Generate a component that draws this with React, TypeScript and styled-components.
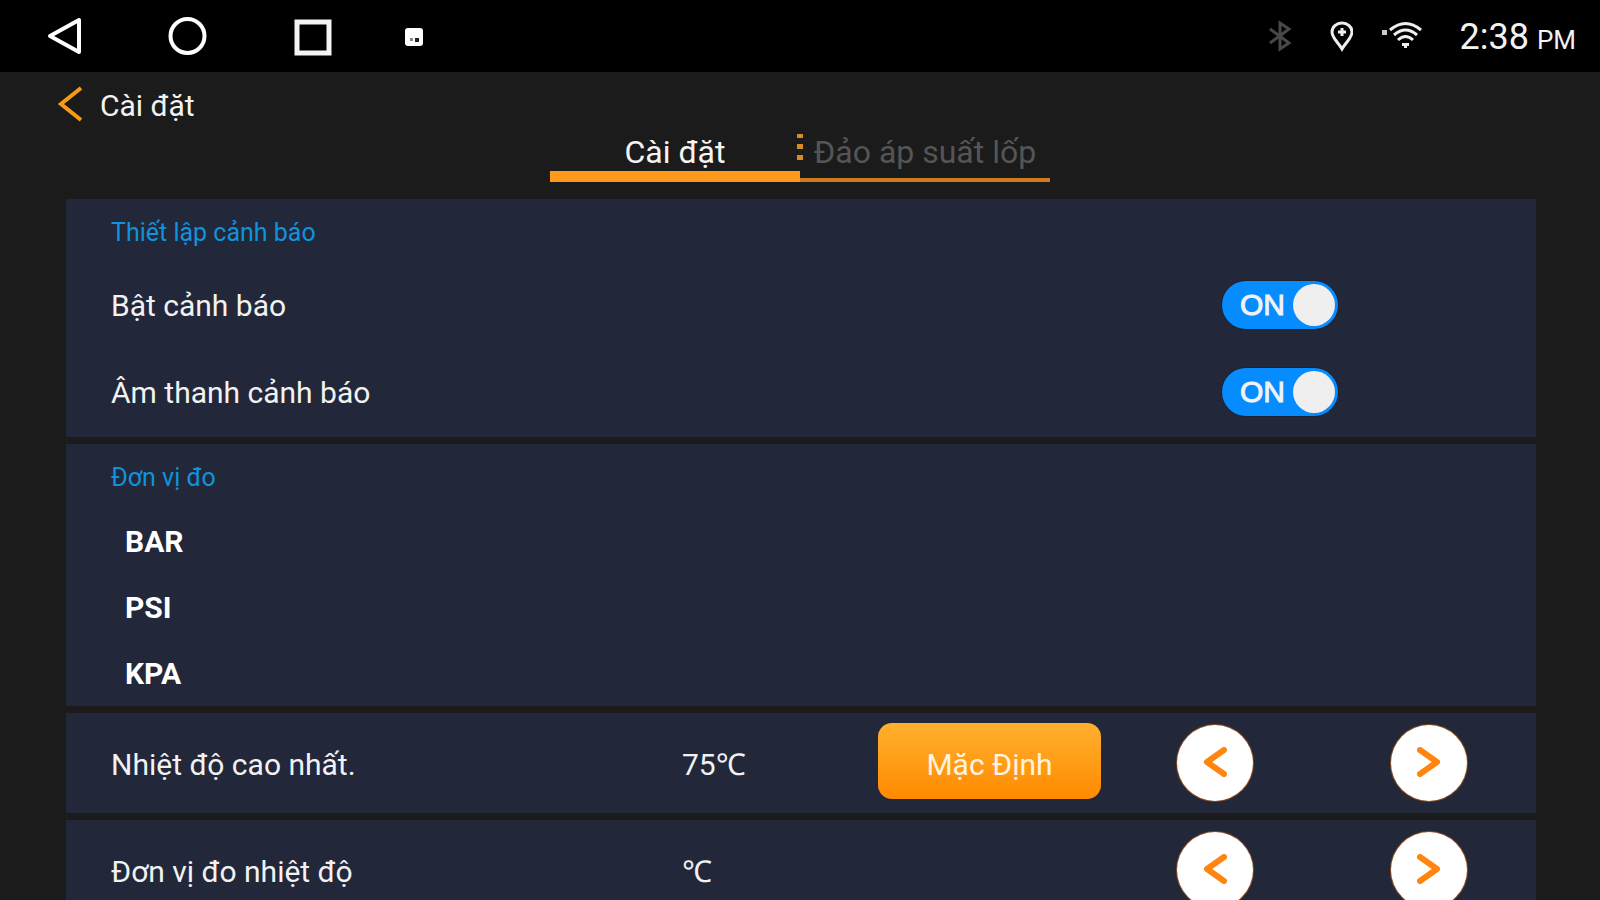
import React, { useState } from "react";
import styled, { createGlobalStyle } from "styled-components";

const GlobalStyle = createGlobalStyle`
  * { box-sizing: border-box; }
  body {
    margin: 0;
    background: #1b1b1b;
    color: #f2f2f2;
    font-family: Roboto, "Noto Sans", sans-serif;
  }
  button { font-family: inherit; border: 0; padding: 0; cursor: pointer; }
`;

const Screen = styled.div`
  display: flex;
  flex-direction: column;
  height: 100vh;
  overflow: hidden;
`;

const StatusBar = styled.header`
  display: flex;
  flex: none;
  align-items: center;
  justify-content: space-between;
  height: 72px;
  padding: 0 24px 0 42px;
  background: #000;
`;

const StatusStart = styled.div`
  display: flex;
  align-items: center;
  gap: 71px;
`;

const NavKeys = styled.nav`
  display: flex;
  align-items: center;
  gap: 80px;
`;

const NavKey = styled.button`
  display: flex;
  width: 44px;
  height: 44px;
  align-items: center;
  justify-content: center;
  background: none;
`;

const StatusIcons = styled.div`
  display: flex;
  align-items: center;
  gap: 28px;

  svg { display: block; }
`;

const Clock = styled.time`
  display: flex;
  align-items: baseline;
  gap: 8px;
  margin-left: 8px;
  font-size: 36px;
  line-height: 44px;
  padding-top: 4px;
`;

const Meridiem = styled.span`
  font-size: 26px;
`;

const TitleBar = styled.div`
  display: flex;
  flex: none;
  align-items: center;
  gap: 16px;
  height: 60px;
  padding: 4px 56px 0;
`;

const BackButton = styled.button`
  display: flex;
  width: 28px;
  height: 44px;
  align-items: center;
  background: none;
`;

const Title = styled.h1`
  margin: 0;
  font-size: 30px;
  line-height: 40px;
  font-weight: 400;
  padding-top: 4px;
`;

const Tabs = styled.div`
  display: flex;
  flex: none;
  align-self: center;
  width: 500px;
  height: 50px;
`;

const Tab = styled.button<{ $active: boolean }>`
  flex: 1;
  background: none;
  border-bottom: ${(p) => (p.$active ? "11px solid #ff991c" : "4px solid #cf7b1c")};
  color: ${(p) => (p.$active ? "#f4f4f4" : "#555")};
  font-size: 32px;
  line-height: 40px;
  white-space: nowrap;
  align-self: stretch;
  display: flex;
  align-items: flex-start;
  justify-content: center;
`;

const TabDivider = styled.span`
  display: flex;
  flex: none;
  width: 6px;
  margin: 2px -3px 0;
`;

const Panels = styled.main`
  display: flex;
  flex: 1;
  min-height: 0;
  flex-direction: column;
  gap: 7px;
  margin-top: 17px;
  padding: 0 64px 0 66px;
  overflow-y: auto;
  scrollbar-width: none;
`;

const Panel = styled.section`
  flex: none;
  padding: 14px 0 0 45px;
  background: #22273a;
`;

const PanelTitle = styled.h2`
  margin: 0;
  font-size: 25px;
  line-height: 40px;
  font-weight: 400;
  color: #0f93dc;
`;

const SwitchRow = styled.label`
  display: grid;
  grid-template-columns: 913fr 512fr;
  align-items: center;
  height: 87px;
  font-size: 30px;
  line-height: 40px;
  cursor: pointer;
`;

const SwitchList = styled.div`
  padding: 8px 0 2px;
`;

const HiddenInput = styled.input`
  appearance: none;
  width: 0;
  height: 0;
  margin: 0;
`;

const Track = styled.span<{ $on: boolean }>`
  display: flex;
  flex-direction: ${(p) => (p.$on ? "row" : "row-reverse")};
  justify-self: center;
  align-items: center;
  justify-content: space-between;
  width: 116px;
  height: 48px;
  padding: 0 3px 0 18px;
  border-radius: 24px;
  background: ${(p) => (p.$on ? "#078cff" : "#666")};
  box-shadow: 0 0 0 1px #1b2230;
  font-family: "Liberation Sans", sans-serif;
  -webkit-text-stroke: 1px currentColor;
`;

const Knob = styled.span`
  width: 42px;
  height: 42px;
  border-radius: 50%;
  background: #efefef;
`;

const UnitList = styled.div`
  display: flex;
  flex-direction: column;
  padding: 10px 0 0 14px;
`;

const UnitOption = styled.label`
  display: flex;
  align-items: center;
  height: 66px;
  font-size: 30px;
  font-weight: 700;
  color: #fff;
  cursor: pointer;
`;

const AdjustRow = styled.section`
  display: grid;
  flex: none;
  grid-template-columns: 571fr 196fr 230fr 214fr 214fr;
  align-items: center;
  height: 100px;
  padding-left: 45px;
  background: #22273a;
  font-size: 30px;
  line-height: 40px;
`;

const RowText = styled.span`
  padding-top: 3px;
`;

const DefaultButton = styled.button`
  height: 76px;
  margin: 0 7px 4px 0;
  padding-top: 6px;
  border-radius: 14px;
  background: linear-gradient(#ffb02f, #ff8a00);
  color: #fff3e0;
  font-size: 30px;
`;

const RoundButton = styled.button`
  display: flex;
  width: 76px;
  height: 76px;
  align-items: center;
  justify-content: center;
  justify-self: center;
  border-radius: 50%;
  background: #fff;
  box-shadow: 0 0 0 1px #8a4c20;
`;

const Arrow = ({ flip = false }: { flip?: boolean }) => (
  <svg width="24" height="32" viewBox="0 0 24 32" fill="none" aria-hidden="true">
    <path
      d={flip ? "M3 3 L20 15 L3 27" : "M21 3 L4 15 L21 27"}
      stroke="#ff850f"
      strokeWidth="6"
      strokeLinecap="round"
      strokeLinejoin="round"
    />
  </svg>
);

function Switch({ label }: { label: string }) {
  const [on, setOn] = useState(true);
  return (
    <SwitchRow>
      <RowText>
        {label}
        <HiddenInput type="checkbox" checked={on} onChange={() => setOn(!on)} />
      </RowText>
      <Track $on={on}>
        {on ? "ON" : "OFF"}
        <Knob />
      </Track>
    </SwitchRow>
  );
}

function Adjust({ label, value, resettable = false }: { label: string; value: string; resettable?: boolean }) {
  return (
    <AdjustRow aria-label={label}>
      <RowText>{label}</RowText>
      <RowText>{value}</RowText>
      {resettable ? <DefaultButton>Mặc Định</DefaultButton> : <span />}
      <RoundButton aria-label="Giảm"><Arrow /></RoundButton>
      <RoundButton aria-label="Tăng"><Arrow flip /></RoundButton>
    </AdjustRow>
  );
}

export default function App() {
  const [tab, setTab] = useState(0);
  return (
    <Screen>
      <GlobalStyle />
      <StatusBar>
        <StatusStart>
          <NavKeys>
            <NavKey aria-label="Back">
              <svg width="44" height="44" viewBox="0 0 44 44" fill="none" stroke="#fff" strokeWidth="4" strokeLinejoin="round">
                <path d="M37 6 V38 L8 22 Z" />
              </svg>
            </NavKey>
            <NavKey aria-label="Home">
              <svg width="44" height="44" viewBox="0 0 44 44" fill="none" stroke="#fff" strokeWidth="4">
                <circle cx="21.500" cy="22" r="17" />
              </svg>
            </NavKey>
            <NavKey aria-label="Recent">
              <svg width="44" height="44" viewBox="0 0 44 44" fill="none" stroke="#f4f4f4" strokeWidth="5">
                <rect x="7" y="8" width="32" height="31" />
              </svg>
            </NavKey>
          </NavKeys>
          <svg width="20" height="20" viewBox="0 0 20 20">
            <rect x="0" y="2" width="18" height="18" rx="3" fill="#fff" />
            <path d="M5 12h3v3H5z" fill="#888" />
            <path d="M10 12h4v4h-4z" fill="#222" />
          </svg>
        </StatusStart>
        <StatusIcons>
          <svg width="42" height="32" viewBox="0 0 42 32" fill="none" stroke="#484848" strokeWidth="3">
            <path d="M11 9 L30 23 L21 29 V3 L30 9 L11 23" />
          </svg>
          <svg width="24" height="32" viewBox="0 0 24 32" fill="none" stroke="#eee" strokeWidth="3">
            <path d="M13 29 C9 22 3 18 3 12 A10 9 0 0 1 23 12 C23 18 17 22 13 29 Z" />
            <path d="M13 8v8M9 12h8" />
          </svg>
          <svg width="42" height="32" viewBox="0 0 42 32" fill="none" stroke="#eee" strokeWidth="3">
            <rect x="1" y="10" width="5" height="5" fill="#ccc" stroke="none" />
            <path d="M9 10 Q24.500 -3 40 10M13 15 Q24.500 5 36 15M17 20 Q24.500 13 32 20" />
            <path d="M21 23 h7 v3 h-2 v2 h-3 v-2 h-2z" fill="#eee" stroke="none" />
          </svg>
          <Clock>
            2:38<Meridiem>PM</Meridiem>
          </Clock>
        </StatusIcons>
      </StatusBar>

      <TitleBar>
        <BackButton aria-label="Quay lại">
          <svg width="28" height="40" viewBox="0 0 28 40" fill="none">
            <path d="M25 4 L5 20 L25 36" stroke="#f79a14" strokeWidth="4" />
          </svg>
        </BackButton>
        <Title>Cài đặt</Title>
      </TitleBar>

      <Tabs role="tablist">
        <Tab role="tab" aria-selected={tab === 0} $active={tab === 0} onClick={() => setTab(0)}>
          Cài đặt
        </Tab>
        <TabDivider>
          <svg width="6" height="26" viewBox="0 0 6 26" fill="#d98a22">
            <path d="M0 0h6v4H0zM0 10h6v5H0zM0 21h6v5H0z" />
          </svg>
        </TabDivider>
        <Tab role="tab" aria-selected={tab === 1} $active={tab === 1} onClick={() => setTab(1)}>
          Đảo áp suất lốp
        </Tab>
      </Tabs>

      <Panels>
        <Panel>
          <PanelTitle>Thiết lập cảnh báo</PanelTitle>
          <SwitchList>
            <Switch label="Bật cảnh báo" />
            <Switch label="Âm thanh cảnh báo" />
          </SwitchList>
        </Panel>
        <Panel>
          <PanelTitle>Đơn vị đo</PanelTitle>
          <UnitList role="radiogroup" aria-label="Đơn vị đo">
            {["BAR", "PSI", "KPA"].map((unit) => (
              <UnitOption key={unit}>
                <HiddenInput type="radio" name="unit" value={unit} />
                {unit}
              </UnitOption>
            ))}
          </UnitList>
        </Panel>
        <Adjust label="Nhiệt độ cao nhất." value="75℃" resettable />
        <Adjust label="Đơn vị đo nhiệt độ" value="℃" />
      </Panels>
    </Screen>
  );
}
